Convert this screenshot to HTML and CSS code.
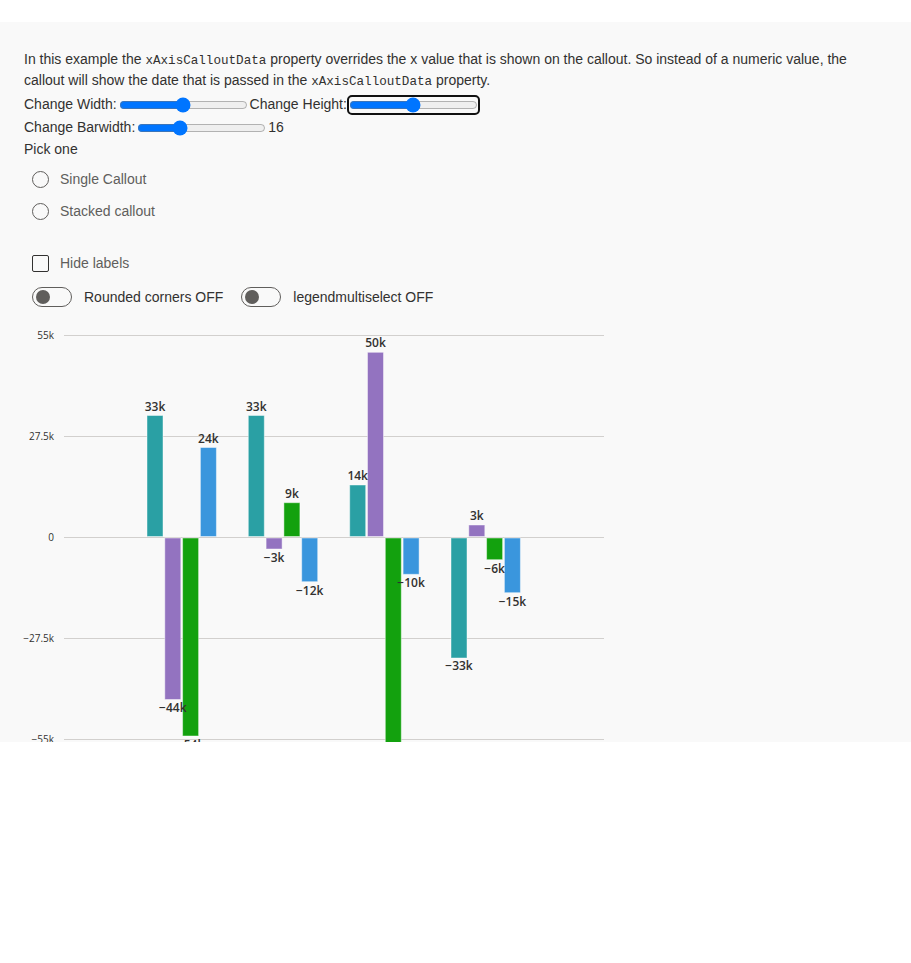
FILE: index.html
```html
<!DOCTYPE html>
<html>
<head>
<meta charset="utf-8">
<link rel="stylesheet" href="styles.css">
</head>
<body>
<div class="panel">
  <div class="controls">
    <p class="intro">In this example the <code>xAxisCalloutData</code> property overrides the x value that is shown on the callout. So instead of a numeric value, the callout will show the date that is passed in the <code>xAxisCalloutData</code> property.</p>
    <div class="slider-row first"><label>Change Width:</label><input type="range" min="200" max="1000" value="600"><label>Change Height:</label><input class="focused" type="range" min="200" max="1000" value="600"></div>
    <div class="slider-row"><label>Change Barwidth:</label><input type="range" min="1" max="50" value="16"><span class="val">16</span></div>
    <div class="pick">Pick one</div>
    <div class="options">
      <div class="option"><span class="radio"></span><span>Single Callout</span></div>
      <div class="option"><span class="radio"></span><span>Stacked callout</span></div>
    </div>
    <div class="check"><span class="box"></span><span>Hide labels</span></div>
    <div class="toggles">
      <div class="toggle"><span class="pill"><span class="knob"></span></span><span>Rounded corners OFF</span></div>
      <div class="toggle"><span class="pill"><span class="knob"></span></span><span>legendmultiselect OFF</span></div>
    </div>
  </div>
  <svg class="chart" width="620" height="440" viewBox="0 0 620 440">
    <g class="grid">
      <line x1="64" x2="604" y1="15.5" y2="15.5"/>
      <line x1="64" x2="604" y1="116.5" y2="116.5"/>
      <line x1="64" x2="604" y1="217.5" y2="217.5"/>
      <line x1="64" x2="604" y1="318.5" y2="318.5"/>
      <line x1="64" x2="604" y1="419.5" y2="419.5"/>
    </g>
    <g class="yaxis">
      <text x="54" y="19">55k</text>
      <text x="54" y="120">27.5k</text>
      <text x="54" y="221">0</text>
      <text x="54" y="322">−27.5k</text>
      <text x="54" y="423">−55k</text>
    </g>
    <g class="bars">
      <rect class="teal" x="147" y="95.5" width="16" height="121"/>
      <rect class="purple" x="164.8" y="218" width="16" height="161.5"/>
      <rect class="green" x="182.6" y="218" width="16" height="198"/>
      <rect class="blue" x="200.4" y="127.5" width="16" height="89"/>

      <rect class="teal" x="248.3" y="95.5" width="16" height="121"/>
      <rect class="purple" x="266.1" y="218" width="16" height="11"/>
      <rect class="green" x="283.9" y="182.7" width="16" height="33.8"/>
      <rect class="blue" x="301.7" y="218" width="16" height="43.7"/>

      <rect class="teal" x="349.7" y="165" width="16" height="51.5"/>
      <rect class="purple" x="367.5" y="32.3" width="16" height="184.2"/>
      <rect class="green" x="385.3" y="218" width="16" height="230"/>
      <rect class="blue" x="403.1" y="218" width="16" height="36.3"/>

      <rect class="teal" x="451" y="218" width="16" height="120"/>
      <rect class="purple" x="468.8" y="205" width="16" height="11.5"/>
      <rect class="green" x="486.6" y="218" width="16" height="21.7"/>
      <rect class="blue" x="504.4" y="218" width="16" height="54.7"/>
    </g>
    <g class="labels">
      <text x="155" y="90.5">33k</text>
      <text x="172.8" y="392">−44k</text>
      <text x="190.6" y="429">−54k</text>
      <text x="208.4" y="122.5">24k</text>

      <text x="256.3" y="90.5">33k</text>
      <text x="274.1" y="241.5">−3k</text>
      <text x="291.9" y="177.5">9k</text>
      <text x="309.7" y="274.5">−12k</text>

      <text x="357.7" y="160">14k</text>
      <text x="375.5" y="27">50k</text>
      <text x="411.1" y="267">−10k</text>

      <text x="459" y="350">−33k</text>
      <text x="476.8" y="200">3k</text>
      <text x="494.6" y="252.5">−6k</text>
      <text x="512.4" y="285.5">−15k</text>
    </g>
  </svg>
</div>
</body>
</html>
```
FILE: styles.css
```css
html, body {
  margin: 0;
  padding: 0;
  background: #ffffff;
}
.panel {
  margin-top: 22px;
  background: #f9f9f9;
  height: 720px;
  overflow: hidden;
  font-family: "Liberation Sans", Arial, sans-serif;
  font-size: 14px;
  color: #323130;
}
.controls {
  padding: 27px 24px 0;
}
.intro {
  margin: 0;
  line-height: 21px;
}
code {
  font-family: "Liberation Mono", monospace;
  font-size: 12.6px;
  line-height: 1;
}
.slider-row {
  display: flex;
  align-items: center;
  height: 23px;
  line-height: 23px;
}
.slider-row.first {
  margin-top: 2px;
}
.slider-row input {
  margin: 2px;
  width: 129px;
  height: 16px;
}
.slider-row input.focused {
  outline: 2px solid #111;
  outline-offset: 0;
  border-radius: 3px;
}
.pick {
  margin-top: 0;
  line-height: 20px;
}
.options {
  padding-top: 10px;
  display: flex;
  flex-direction: column;
  gap: 12px;
}
.option, .check, .toggle {
  display: flex;
  align-items: center;
  height: 20px;
}
.option {
  color: #605e5c;
  padding-left: 8px;
}
.radio {
  width: 15px;
  height: 15px;
  border: 1px solid #605e5c;
  border-radius: 50%;
  margin-right: 11px;
}
.check {
  margin-top: 32px;
  padding-left: 8px;
  color: #605e5c;
}
.box {
  width: 15px;
  height: 15px;
  border: 1px solid #323130;
  border-radius: 2px;
  margin-right: 11px;
}
.toggles {
  margin-top: 14px;
  display: flex;
  gap: 18px;
  padding-left: 8px;
}
.pill {
  box-sizing: border-box;
  width: 40px;
  height: 20px;
  border: 1px solid #605e5c;
  border-radius: 10px;
  display: flex;
  align-items: center;
  padding-left: 3px;
  margin-right: 12px;
}
.knob {
  width: 14px;
  height: 14px;
  border-radius: 50%;
  background: #605e5c;
}
.chart {
  display: block;
  margin-top: 13px;
}
.grid line {
  stroke: #d2d0ce;
  stroke-width: 1;
}
.yaxis text {
  font-size: 10px;
  fill: #323130;
  text-anchor: end;
  font-family: "Open Sans", "Liberation Sans", sans-serif;
}
.labels text {
  font-size: 12px;
  font-weight: 600;
  fill: #323130;
  text-anchor: middle;
  font-family: "Open Sans", "Liberation Sans", sans-serif;
}
.bars rect {
  stroke: #ffffff;
  stroke-opacity: 0.45;
  stroke-width: 1;
}
.teal { fill: #2aa0a4; }
.purple { fill: #9373c0; }
.green { fill: #13a10e; }
.blue { fill: #3a96dd; }
```
